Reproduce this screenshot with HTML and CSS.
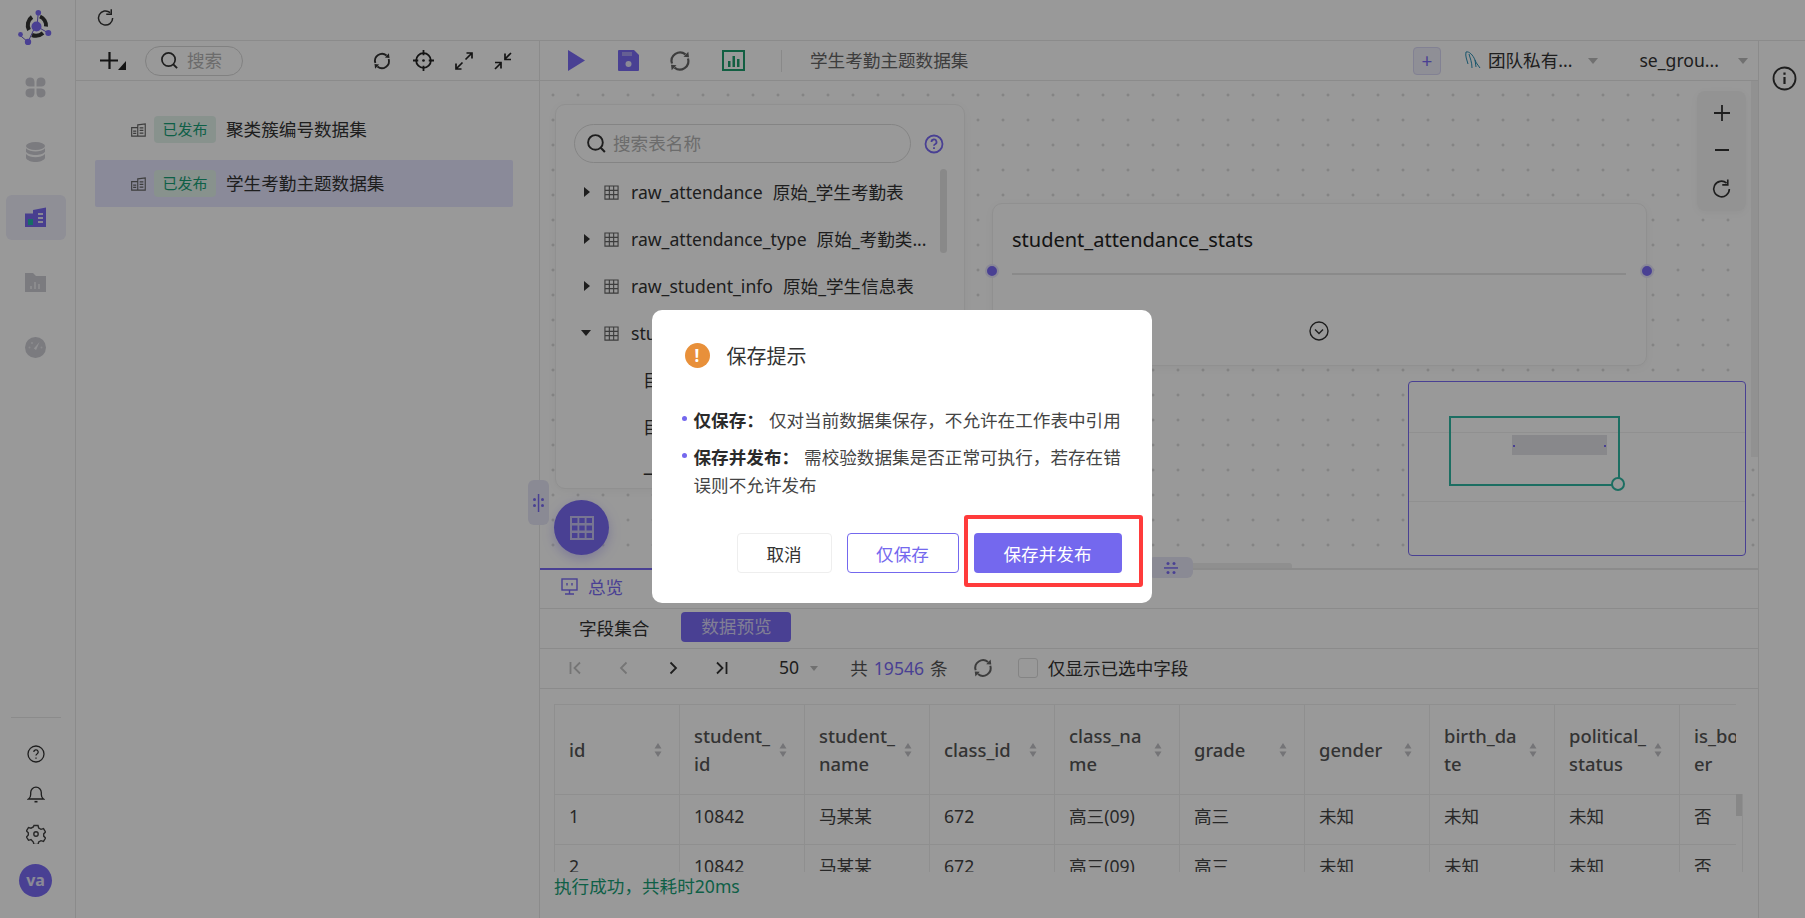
FILE: index.html
```html
<!DOCTYPE html>
<html lang="en">
<head>
    <meta charset="UTF-8">
    <title>学生考勤主题数据集</title>
    <link rel="stylesheet" href="styles.css">
</head>
<body>
    <svg class="sprites" width="0" height="0">
        <defs>
            <symbol id="i-sync" viewBox="0 0 24 24">
                <path d="M4 14.500A8.500 8.500 0 0 1 17.500 5.400M20 9.500A8.500 8.500 0 0 1 6.500 18.600" fill="none" stroke="currentColor" stroke-width="2.200"/>
                <path d="M15.500 7.800 21 8.300 20.300 2.800zM8.500 16.200 3 15.700 3.700 21.200z" fill="currentColor"/>
            </symbol>
            <symbol id="i-reset" viewBox="0 0 24 24">
                <path d="M20 12a8.500 8.500 0 1 1-3-6.500" fill="none" stroke="currentColor" stroke-width="1.800"/>
                <path d="M18.300 1.500v6h-6" fill="none" stroke="currentColor" stroke-width="1.800"/>
            </symbol>
            <symbol id="i-search" viewBox="0 0 20 20">
                <circle cx="9" cy="9" r="7" fill="none" stroke="currentColor" stroke-width="1.800"/>
                <path d="M14 14l4 4" stroke="currentColor" stroke-width="2"/>
            </symbol>
            <symbol id="i-table" viewBox="0 0 16 16">
                <path d="M1 1h14v14H1zM1 5.700h14M1 10.300h14M5.700 1v14M10.300 1v14" fill="none" stroke="currentColor" stroke-width="1.200"/>
            </symbol>
            <symbol id="i-dataset" viewBox="0 0 16 14">
                <path d="M.7 4.500h6.500v9H.7zM7.200 1.500l8-1v13h-8z" fill="none" stroke="currentColor" stroke-width="1.200"/>
                <path d="M2.300 7.500h3.300v1.300H2.300zM2.300 10h3.300v1.300H2.300zM9.200 4h4v1.300h-4zM9.200 6.800h4v1.300h-4zM9.200 9.600h4v1.300h-4z" fill="currentColor"/>
            </symbol>
            <symbol id="i-sort" viewBox="0 0 8 14">
                <path d="M4 0l3.500 5.500H.5zM4 14L.5 8.500h7z" fill="currentColor"/>
            </symbol>
        </defs>
    </svg>

    <div class="app">
        <aside class="sidebar">
            <svg class="logo" viewBox="0 0 36 36" width="36" height="36">
                <path d="M20.300 3.700 19 17M30.300 24 19 17.500M10 33 17 18M10 33 1 25.500" stroke="#6a5ccf" stroke-width="1" fill="none"/>
                <path d="M11 21a10 10 0 0 1 3-13M22 7.500a10 10 0 0 1 6 10M25 24a11 11 0 0 1-11 2" stroke="#333" stroke-width="4" fill="none"/>
                <circle cx="18.500" cy="17.500" r="5" fill="#7c6cf6"/>
                <circle cx="20.300" cy="3.700" r="2.800" fill="#7c6cf6"/>
                <circle cx="30.300" cy="24" r="3" fill="#7c6cf6"/>
                <circle cx="10" cy="33" r="3.200" fill="#7c6cf6"/>
                <circle cx="2.500" cy="25.500" r="2.400" fill="#7c6cf6"/>
            </svg>
            <nav class="side-nav">
                <a class="side-item">
                    <svg viewBox="0 0 21 21" width="21" height="21" fill="#cdcdd4"><path d="M9.500 9.500H4.700A4.500 4.500 0 1 1 9.500 4.700zM11.500 9.500V4.700a4.500 4.500 0 1 1 4.800 4.800zM9.500 11.500v4.800a4.500 4.500 0 1 1-4.800-4.800zM11.500 11.500h4.800a4.500 4.500 0 1 1-4.800 4.800z"/></svg>
                </a>
                <a class="side-item">
                    <svg viewBox="0 0 21 21" width="21" height="21" fill="#cdcdd4"><ellipse cx="10.500" cy="4" rx="9.500" ry="4"/><path d="M1 6.300c2 2.500 6 3.200 9.500 3.200S18 8.800 20 6.300v3.400c-1.500 2.300-5.500 3.200-9.500 3.200S2.500 12 1 9.700zM1 12c2 2.500 6 3.200 9.500 3.200S18 14.500 20 12v4c-1 2.500-5.500 4-9.500 4S2 18.500 1 16z"/></svg>
                </a>
                <a class="side-item active">
                    <svg viewBox="0 0 21 21" width="21" height="21"><path d="M0 6.500h8V3l13-2.500V20H0z" fill="#7868ee"/><path d="M3 12h5v6H3z" fill="#25b8a8"/><path d="M13 6h5v2h-5zM13 10h5v2h-5zM13 14h5v2h-5z" fill="#e4e2f6"/></svg>
                </a>
                <a class="side-item">
                    <svg viewBox="0 0 21 21" width="21" height="21"><path d="M0 1h8l3 3h10v16H0z" fill="#cdcdd4"/><path d="M5 14h2v3H5zM9 10h2v7H9zM13 12h2v5h-2z" fill="#e8e8ec"/></svg>
                </a>
                <a class="side-item">
                    <svg viewBox="0 0 21 21" width="21" height="21"><circle cx="10.500" cy="10.500" r="10.500" fill="#cdcdd4"/><path d="M8.800 11.500 14.500 5l-3.400 8z" fill="#f2f2f5"/><circle cx="4.500" cy="10.500" r="1" fill="#e8e8ec"/><circle cx="7" cy="6" r="1" fill="#e8e8ec"/><circle cx="16.500" cy="10.500" r="1" fill="#e8e8ec"/></svg>
                </a>
            </nav>
            <div class="side-bottom">
                <svg class="side-help" viewBox="0 0 18 18" width="18" height="18" fill="none" stroke="#333" stroke-width="1.300"><circle cx="9" cy="9" r="8"/><path d="M6.800 7a2.200 2.200 0 1 1 3.200 2c-.7.400-1 .8-1 1.600"/><path d="M9 12.400v1.300"/></svg>
                <svg viewBox="0 0 18 18" width="18" height="18" fill="none" stroke="#333" stroke-width="1.300"><path d="M1.500 14h15c-1.500-1-2.200-2.500-2.200-4.500V7.500a5.300 5.300 0 0 0-10.600 0v2C3.700 11.500 3 13 1.500 14z"/><path d="M7.500 16.700h3" stroke-width="1.600"/></svg>
                <svg viewBox="0 0 20 20" width="20" height="20" fill="none" stroke="#444" stroke-width="1.400"><path d="M8 1.500h4l.7 2.500 2.300 1.300 2.500-.7 2 3.400-1.800 1.900v2.200l1.800 1.900-2 3.400-2.500-.7-2.300 1.300-.7 2.500H8l-.7-2.500L5 15.600l-2.500.7-2-3.400 1.800-1.900V8.800L.5 6.900l2-3.400 2.500.7 2.300-1.300z"/><circle cx="10" cy="10" r="2.200"/></svg>
                <div class="avatar">va</div>
            </div>
        </aside>

        <div class="workspace">
            <div class="topbar">
                <svg class="text-dark" width="20" height="20"><use href="#i-reset"/></svg>
            </div>

            <div class="columns">
                <section class="left-panel">
                    <div class="left-toolbar">
                        <div class="add-group">
                            <svg viewBox="0 0 26 18" width="26" height="18"><path d="M9.500 0v17M0 8.500h18" stroke="#222" stroke-width="2.200"/><path d="M26 9v9h-8z" fill="#222"/></svg>
                        </div>
                        <div class="pill-search">
                            <svg class="text-dark" width="19" height="19"><use href="#i-search"/></svg>
                            <span class="placeholder">搜索</span>
                        </div>
                        <div class="left-tools">
                            <svg class="text-dark" width="20" height="20"><use href="#i-sync"/></svg>
                            <svg viewBox="0 0 20 20" width="21" height="21" fill="none" stroke="#222" stroke-width="1.700"><circle cx="10" cy="10" r="7"/><path d="M10 0v5M10 15v5M0 10h5M15 10h5"/><circle cx="10" cy="10" r="1.300" fill="#222" stroke="none"/></svg>
                            <svg viewBox="0 0 18 18" width="18" height="18" fill="none" stroke="#222" stroke-width="1.700"><path d="M10.500 7.500 17 1M11.500 1H17v5.500M7.500 10.500 1 17M6.500 17H1v-5.500"/></svg>
                            <svg viewBox="0 0 18 18" width="18" height="18" fill="none" stroke="#222" stroke-width="1.700"><path d="M17 1l-6.500 6.500M11 1.500v6h6M1 17l6.500-6.500M7 16.500v-6H1"/></svg>
                        </div>
                    </div>
                    <ul class="dataset-list">
                        <li class="dataset-row">
                            <svg class="text-mid" width="15" height="14"><use href="#i-dataset"/></svg>
                            <span class="tag">已发布</span>
                            <span class="dataset-name">聚类簇编号数据集</span>
                        </li>
                        <li class="dataset-row selected">
                            <svg class="text-mid" width="15" height="14"><use href="#i-dataset"/></svg>
                            <span class="tag">已发布</span>
                            <span class="dataset-name">学生考勤主题数据集</span>
                        </li>
                    </ul>
                </section>

                <main class="main">
                    <div class="main-toolbar">
                        <svg class="tool-play" viewBox="0 0 17 21" width="17" height="21"><path d="M0 0l17 10.500L0 21z" fill="#7b6cf6"/></svg>
                        <svg class="tool-save" viewBox="0 0 21 21" width="21" height="21"><path d="M1 0h15l5 5v15a1 1 0 0 1-1 1H1a1 1 0 0 1-1-1V1a1 1 0 0 1 1-1z" fill="#7b6cf6"/><path d="M4 2h10v4H4z" fill="#a99ff6"/><circle cx="10.500" cy="14" r="3" fill="#e8e6fb"/></svg>
                        <svg class="tool-sync text-mid" width="24" height="24"><use href="#i-sync"/></svg>
                        <svg class="tool-chart" viewBox="0 0 23 21" width="23" height="21" fill="none"><rect x="1" y="1" width="21" height="19" stroke="#1f9e6e" stroke-width="2"/><path d="M6 11h2.500v6H6zM10.500 6H13v11h-2.500zM15 9h2.500v8H15z" fill="#1f9e6e"/></svg>
                        <span class="tool-divider"></span>
                        <span class="dataset-title">学生考勤主题数据集</span>
                        <button class="add-source">+</button>
                        <svg class="db-icon" viewBox="0 0 17 19" width="17" height="19" fill="none" stroke="#2a8fb5" stroke-width="1"><path d="M2 1c3-1 7 3 9 8 1 3 3 5 5 8M2 1c-1 4 1 8 2 12M5 3c1 4 3 8 3 14M11 9l1 7"/></svg>
                        <span class="select-text">团队私有...</span>
                        <span class="caret caret-1"></span>
                        <span class="select-text select-schema">se_grou...</span>
                        <span class="caret caret-2"></span>
                    </div>

                    <div class="canvas">
                        <div class="table-panel">
                            <div class="table-search-row">
                                <div class="table-search">
                                    <svg class="text-dark" width="21" height="21"><use href="#i-search"/></svg>
                                    <span class="placeholder">搜索表名称</span>
                                </div>
                                <svg class="help-icon" viewBox="0 0 20 20" width="20" height="20" fill="none" stroke="#7b6cf6" stroke-width="1.800"><circle cx="10" cy="10" r="8.500"/><path d="M7.500 8a2.500 2.500 0 1 1 3.600 2.200c-.8.400-1.100.8-1.100 1.600M10 13.300v1.700"/></svg>
                            </div>
                            <ul class="tree">
                                <li class="tree-row"><span class="arrow"></span><svg class="text-mid" width="15" height="15"><use href="#i-table"/></svg><span>raw_attendance</span><span>原始_学生考勤表</span></li>
                                <li class="tree-row"><span class="arrow"></span><svg class="text-mid" width="15" height="15"><use href="#i-table"/></svg><span>raw_attendance_type</span><span>原始_考勤类...</span></li>
                                <li class="tree-row"><span class="arrow"></span><svg class="text-mid" width="15" height="15"><use href="#i-table"/></svg><span>raw_student_info</span><span>原始_学生信息表</span></li>
                                <li class="tree-row"><span class="arrow open"></span><svg class="text-mid" width="15" height="15"><use href="#i-table"/></svg><span>student_attendance_stats</span></li>
                                <li class="tree-child">目</li>
                                <li class="tree-child">目</li>
                                <li class="tree-child">一</li>
                            </ul>
                            <div class="tree-scroll"></div>
                        </div>

                        <button class="collapse-handle" aria-label="collapse">
                            <svg viewBox="0 0 11 18" width="11" height="18" fill="#7b6cf6"><path d="M4.800 0h1.500v18H4.800z"/><circle cx="1.500" cy="5.500" r="1.500"/><circle cx="1.500" cy="11.500" r="1.500"/><circle cx="9.500" cy="5.500" r="1.500"/><circle cx="9.500" cy="11.500" r="1.500"/></svg>
                        </button>
                        <button class="float-btn" aria-label="tables">
                            <svg viewBox="0 0 24 24" width="24" height="24" fill="#c9c5f4"><path d="M0 0h24v24H0zM2 2v5h5.500V2zm7.300 0v5h5.400V2zm7.200 0v5H22V2zM2 9.500v5h5.500v-5zm7.300 0v5h5.400v-5zm7.200 0v5H22v-5zM2 17v5h5.500v-5zm7.300 0v5h5.400v-5zm7.200 0v5H22v-5z" fill-rule="evenodd"/></svg>
                        </button>

                        <div class="node">
                            <div class="node-title">student_attendance_stats</div>
                            <div class="node-rule"></div>
                            <svg class="node-more" viewBox="0 0 20 20" width="20" height="20" fill="none" stroke="#333" stroke-width="1.400"><circle cx="10" cy="10" r="9"/><path d="M6 8.500l4 4 4-4"/></svg>
                            <span class="port port-in"></span>
                            <span class="port port-out"></span>
                        </div>

                        <div class="zoom-tools">
                            <svg viewBox="0 0 18 18" width="18" height="18"><path d="M9 1v16M1 9h16" stroke="#333" stroke-width="1.800"/></svg>
                            <svg viewBox="0 0 18 18" width="18" height="18"><path d="M2 9h14" stroke="#333" stroke-width="2"/></svg>
                            <svg class="text-dark" width="22" height="22"><use href="#i-reset"/></svg>
                        </div>

                        <div class="minimap">
                            <span class="mini-line line-a"></span>
                            <span class="mini-line line-b"></span>
                            <span class="mini-node"></span>
                            <span class="mini-view"></span>
                            <span class="mini-grip"></span>
                        </div>

                        <div class="canvas-vscroll"></div>
                        <div class="canvas-hscroll"></div>
                        <div class="split-handle">
                            <svg viewBox="0 0 14 12" width="14" height="12" fill="#7b6cf6"><path d="M0 5.200h14v1.500H0z"/><circle cx="4" cy="1.500" r="1.500"/><circle cx="10" cy="1.500" r="1.500"/><circle cx="4" cy="10.500" r="1.500"/><circle cx="10" cy="10.500" r="1.500"/></svg>
                        </div>
                    </div>

                    <div class="tab-strip"><span class="tab-ink"></span></div>
                    <div class="tab-row">
                        <svg viewBox="0 0 17 17" width="17" height="17" fill="none" stroke="#7b6cf6" stroke-width="1.400"><rect x="1" y="1" width="15" height="11"/><path d="M8.500 12v4M4 16h9M6 5v2.500M11 5v2.500"/></svg>
                        <span class="tab-label">总览</span>
                    </div>
                    <div class="sub-tabs">
                        <span class="sub-tab">字段集合</span>
                        <span class="sub-tab current">数据预览</span>
                    </div>
                    <div class="pager">
                        <svg class="page-btn off" viewBox="0 0 14 14" width="14" height="14" fill="none" stroke="currentColor" stroke-width="1.800"><path d="M2.500 1v12M12 1.500 6.500 7l5.500 5.500"/></svg>
                        <svg class="page-btn off" viewBox="0 0 14 14" width="14" height="14" fill="none" stroke="currentColor" stroke-width="1.800"><path d="M9.500 1.500 4 7l5.500 5.500"/></svg>
                        <svg class="page-btn" viewBox="0 0 14 14" width="14" height="14" fill="none" stroke="currentColor" stroke-width="1.800"><path d="M4.500 1.500 10 7l-5.500 5.500"/></svg>
                        <svg class="page-btn" viewBox="0 0 14 14" width="14" height="14" fill="none" stroke="currentColor" stroke-width="1.800"><path d="M2 1.500 7.500 7 2 12.500M11.500 1v12"/></svg>
                        <span class="page-size">50</span>
                        <span class="caret caret-small"></span>
                        <span class="page-total">共<em>19546</em>条</span>
                        <svg class="page-sync text-mid" width="22" height="22"><use href="#i-sync"/></svg>
                        <span class="checkbox"></span>
                        <span class="check-label">仅显示已选中字段</span>
                    </div>

                    <div class="table-wrap">
                        <div class="table-clip">
                            <table class="data-table">
                                <colgroup>
                                    <col class="col-first"><col><col><col><col><col><col><col><col><col>
                                </colgroup>
                                <thead>
                                    <tr>
                                        <th><div class="th-in"><span>id</span><svg class="sort" width="8" height="14"><use href="#i-sort"/></svg></div></th>
                                        <th><div class="th-in"><span>student_<br>id</span><svg class="sort" width="8" height="14"><use href="#i-sort"/></svg></div></th>
                                        <th><div class="th-in"><span>student_<br>name</span><svg class="sort" width="8" height="14"><use href="#i-sort"/></svg></div></th>
                                        <th><div class="th-in"><span>class_id</span><svg class="sort" width="8" height="14"><use href="#i-sort"/></svg></div></th>
                                        <th><div class="th-in"><span>class_na<br>me</span><svg class="sort" width="8" height="14"><use href="#i-sort"/></svg></div></th>
                                        <th><div class="th-in"><span>grade</span><svg class="sort" width="8" height="14"><use href="#i-sort"/></svg></div></th>
                                        <th><div class="th-in"><span>gender</span><svg class="sort" width="8" height="14"><use href="#i-sort"/></svg></div></th>
                                        <th><div class="th-in"><span>birth_da<br>te</span><svg class="sort" width="8" height="14"><use href="#i-sort"/></svg></div></th>
                                        <th><div class="th-in"><span>political_<br>status</span><svg class="sort" width="8" height="14"><use href="#i-sort"/></svg></div></th>
                                        <th><div class="th-in"><span>is_board<br>er</span><svg class="sort" width="8" height="14"><use href="#i-sort"/></svg></div></th>
                                    </tr>
                                </thead>
                                <tbody>
                                    <tr><td>1</td><td>10842</td><td>马某某</td><td>672</td><td>高三(09)</td><td>高三</td><td>未知</td><td>未知</td><td>未知</td><td>否</td></tr>
                                    <tr><td>2</td><td>10842</td><td>马某某</td><td>672</td><td>高三(09)</td><td>高三</td><td>未知</td><td>未知</td><td>未知</td><td>否</td></tr>
                                </tbody>
                            </table>
                        </div>
                        <div class="table-vscroll"><span class="table-thumb"></span></div>
                    </div>
                    <div class="run-status">执行成功，共耗时20ms</div>
                </main>

                <aside class="info-rail">
                    <svg viewBox="0 0 25 25" width="25" height="25" fill="none" stroke="#333" stroke-width="1.800"><circle cx="12.500" cy="12.500" r="11"/><path d="M12.500 11v7" stroke-width="2.200"/><path d="M12.500 6.500v2.300" stroke-width="2.200"/></svg>
                </aside>
            </div>
        </div>
    </div>

    <div class="modal-mask">
        <div class="dialog">
            <div class="dialog-head">
                <span class="warn-icon">!</span>
                <span class="dialog-title">保存提示</span>
            </div>
            <ul class="dialog-list">
                <li><b>仅保存：</b>仅对当前数据集保存，不允许在工作表中引用</li>
                <li><b>保存并发布：</b>需校验数据集是否正常可执行，若存在错误则不允许发布</li>
            </ul>
            <div class="dialog-actions">
                <button class="btn btn-cancel">取消</button>
                <button class="btn btn-outline">仅保存</button>
                <button class="btn btn-primary">保存并发布</button>
            </div>
            <span class="red-mark"></span>
        </div>
    </div>
</body>
</html>
```

FILE: styles.css
```css
* {
    margin: 0;
    padding: 0;
    box-sizing: border-box;
}

html, body {
    height: 100%;
    overflow: hidden;
}

body {
    font-family: "Noto Sans", "Noto Sans CJK SC", sans-serif;
    font-size: 17.600px;
    color: #2b2b2b;
    background: #fff;
}

ul {
    list-style: none;
}

button {
    font: inherit;
    border: none;
    background: none;
}

svg {
    display: block;
    flex: none;
}

.sprites {
    position: absolute;
}

.text-dark { color: #333; }
.text-mid { color: #666; }

.app {
    display: flex;
    height: 918px;
}

/* sidebar */
.sidebar {
    width: 76px;
    flex: none;
    border-right: 1px solid #e8e8e8;
    display: flex;
    flex-direction: column;
    align-items: center;
    padding: 9px 4px 0 0;
}

.side-nav {
    margin-top: 20px;
    display: flex;
    flex-direction: column;
    gap: 20px;
}

.side-item {
    width: 60px;
    height: 45px;
    border-radius: 6px;
    display: flex;
    align-items: center;
    justify-content: center;
}

.side-item.active {
    background: #eeeefb;
}

.side-bottom {
    margin-top: auto;
    margin-bottom: 21px;
    padding-top: 27px;
    border-top: 1px solid #e8e8e8;
    width: 50px;
    display: flex;
    flex-direction: column;
    align-items: center;
    gap: 21px;
}

.side-help {
    margin-bottom: 1px;
}

.avatar {
    width: 33px;
    height: 33px;
    border-radius: 50%;
    background: #7b6cf6;
    color: #e8e6fb;
    font-weight: 700;
    font-size: 16px;
    line-height: 33px;
    text-align: center;
    margin-top: -1px;
}

/* frame */
.workspace {
    flex: 1;
    display: flex;
    flex-direction: column;
    min-width: 0;
}

.topbar {
    height: 41px;
    flex: none;
    border-bottom: 1px solid #e8e8e8;
    padding: 8px 0 0 20px;
}

.columns {
    flex: 1;
    display: flex;
    min-height: 0;
}

/* dataset list */
.left-panel {
    width: 463px;
    flex: none;
}

.left-toolbar {
    height: 40px;
    border-bottom: 1px solid #e8e8e8;
    display: flex;
    align-items: center;
    padding: 0 27px 0 24px;
}

.add-group {
    width: 26px;
}

.pill-search {
    margin-left: 19px;
    width: 98px;
    height: 30px;
    border: 1px solid #d8d8d8;
    border-radius: 15px;
    display: flex;
    align-items: center;
    gap: 8px;
    padding-left: 14px;
}

.placeholder {
    color: #b4b4b4;
    font-size: 17.600px;
    margin-top: -2px;
}

.left-tools {
    margin-left: auto;
    display: flex;
    align-items: center;
    gap: 21px;
}

.dataset-list {
    padding: 25px 26px 0 19px;
    display: flex;
    flex-direction: column;
    gap: 7px;
}

.dataset-row {
    height: 47px;
    display: flex;
    align-items: center;
    padding-left: 36px;
    border-radius: 2px;
    color: #333;
}

.dataset-row.selected {
    background: #e6e6ff;
}

.dataset-name {
    margin-top: -2px;
}

.tag {
    margin: 0 10px 0 8px;
    width: 62px;
    height: 27px;
    border-radius: 4px;
    background: #e3f3ec;
    color: #18a077;
    font-size: 15px;
    line-height: 26px;
    text-align: center;
}

/* main column */
.main {
    width: 1219px;
    flex: none;
    border-left: 1px solid #e8e8e8;
    display: flex;
    flex-direction: column;
}

.main-toolbar {
    height: 40px;
    flex: none;
    border-bottom: 1px solid #e8e8e8;
    display: flex;
    align-items: center;
    padding: 0 10px 0 28px;
}

.tool-save { margin-left: 33px; }
.tool-sync { margin-left: 29px; }
.tool-chart { margin-left: 30px; }

.tool-divider {
    width: 1px;
    height: 22px;
    background: #e4e4e4;
    margin-left: 36px;
}

.dataset-title {
    margin: -2px 0 0 28px;
    color: #666;
}

.add-source {
    margin-left: auto;
    width: 28px;
    height: 28px;
    border: 1px solid #d9d7f5;
    border-radius: 4px;
    background: #eeeefb;
    color: #7b6cf6;
    font-size: 19px;
    line-height: 24px;
}

.db-icon { margin-left: 23px; }

.select-text {
    margin: -2px 0 0 7px;
    color: #333;
}

.caret {
    width: 0;
    height: 0;
    border-left: 5px solid transparent;
    border-right: 5px solid transparent;
    border-top: 6px solid #bbb;
}

.caret-1 { margin-left: 16px; }
.select-schema { margin-left: 41px; }
.caret-2 { margin-left: 19px; }

/* canvas */
.canvas {
    height: 487px;
    flex: none;
    position: relative;
    background-color: #fff;
    background-image: radial-gradient(circle, #d0d0d0 1px, transparent 1.200px);
    background-size: 25px 25px;
    background-position: 0.500px 1.500px;
}

.table-panel {
    position: absolute;
    left: 15px;
    top: 23px;
    width: 410px;
    height: 385px;
    background: #fff;
    border: 1px solid #f0f0f0;
    border-radius: 10px;
    box-shadow: 0 2px 10px rgba(0, 0, 0, 0.04);
    padding: 19px 0 0 18px;
    overflow: hidden;
}

.table-search-row {
    display: flex;
    align-items: center;
    gap: 13px;
}

.table-search {
    width: 337px;
    height: 39px;
    border: 1px solid #ddd;
    border-radius: 20px;
    display: flex;
    align-items: center;
    gap: 6px;
    padding-left: 11px;
}

.tree {
    margin-top: 6px;
}

.tree-row {
    height: 47px;
    display: flex;
    align-items: center;
    padding-left: 10px;
    white-space: nowrap;
    color: #333;
}

.tree-row svg {
    margin: 0 12px 0 14px;
}

.tree-row span {
    margin-top: -2px;
}

.tree-row span + span {
    margin-left: 10px;
}

.tree-row svg + span {
    margin-left: 0;
}

.arrow {
    width: 0;
    height: 0;
    border-top: 5px solid transparent;
    border-bottom: 5px solid transparent;
    border-left: 6px solid #333;
}

.arrow.open {
    margin-left: -3px;
    margin-right: -1px;
    border-left: 5px solid transparent;
    border-right: 5px solid transparent;
    border-top: 6px solid #333;
    border-bottom: 0;
}

.tree-child {
    height: 47px;
    line-height: 47px;
    padding-left: 69px;
    color: #333;
}

.tree-scroll {
    position: absolute;
    left: 384px;
    top: 64px;
    width: 7px;
    height: 84px;
    border-radius: 4px;
    background: #e4e4e4;
}

.collapse-handle {
    position: absolute;
    left: -12px;
    top: 399px;
    width: 21px;
    height: 45px;
    border-radius: 6px;
    background: #e6e6f7;
    display: flex;
    align-items: center;
    justify-content: center;
    z-index: 2;
}

.float-btn {
    position: absolute;
    left: 14px;
    top: 419px;
    width: 55px;
    height: 55px;
    border-radius: 50%;
    background: #7b6cf6;
    box-shadow: 0 4px 12px rgba(123, 108, 246, 0.35);
    display: flex;
    align-items: center;
    justify-content: center;
}

.node {
    position: absolute;
    left: 452px;
    top: 122px;
    width: 655px;
    height: 163px;
    background: #fff;
    border: 1px solid #f0f0f0;
    border-radius: 10px;
    box-shadow: 0 2px 10px rgba(0, 0, 0, 0.04);
    padding: 20px 20px 0 19px;
}

.node-title {
    font-size: 20px;
    line-height: 32px;
    color: #222;
}

.node-rule {
    margin-top: 17px;
    height: 2px;
    background: #e6e6e6;
}

.node-more {
    margin: 46px auto 0;
}

.port {
    position: absolute;
    top: 60px;
    width: 14px;
    height: 14px;
    border-radius: 50%;
    background: #7b6cf6;
    border: 2px solid #e6e4fb;
}

.port-in { left: -8px; }
.port-out { right: -8px; }

.zoom-tools {
    position: absolute;
    left: 1157px;
    top: 10px;
    width: 49px;
    height: 120px;
    border-radius: 8px;
    background: #f5f5f5;
    box-shadow: 0 2px 8px rgba(0, 0, 0, 0.04);
    display: flex;
    flex-direction: column;
    align-items: center;
    justify-content: center;
    gap: 19px;
    padding-top: 2px;
}

.minimap {
    position: absolute;
    left: 868px;
    top: 300px;
    width: 338px;
    height: 175px;
    border: 1px solid #7b6cf6;
    border-radius: 4px;
    background: #fff;
}

.mini-line {
    position: absolute;
    left: 0;
    right: 0;
    height: 1px;
    background: #f0f0f0;
}

.line-a { top: 50px; }
.line-b { top: 119px; }

.mini-node {
    position: absolute;
    left: 103px;
    top: 53px;
    width: 95px;
    height: 20px;
    background: #e3e3e8;
}

.mini-node::before,
.mini-node::after {
    content: "";
    position: absolute;
    top: 10px;
    width: 2px;
    height: 2px;
    background: #7b6cf6;
}

.mini-node::before { left: 1px; }
.mini-node::after { right: 1px; }

.mini-view {
    position: absolute;
    left: 40px;
    top: 34px;
    width: 171px;
    height: 70px;
    border: 2px solid #30b8a4;
}

.mini-grip {
    position: absolute;
    left: 202px;
    top: 95px;
    width: 14px;
    height: 14px;
    border: 2px solid #30b8a4;
    border-radius: 50%;
    background: #fff;
}

.canvas-vscroll {
    position: absolute;
    right: 0;
    top: 0;
    width: 7px;
    height: 376px;
    background: #f2f2f2;
}

.canvas-hscroll {
    position: absolute;
    left: 640px;
    top: 482px;
    width: 112px;
    height: 5px;
    border-radius: 3px 3px 0 0;
    background: #eee;
}

.split-handle {
    position: absolute;
    left: 608px;
    top: 476px;
    width: 45px;
    height: 21px;
    border-radius: 6px;
    background: #e6e6f7;
    display: flex;
    align-items: center;
    justify-content: center;
    z-index: 2;
}

/* bottom panel */
.tab-strip {
    height: 2px;
    flex: none;
    background: #e8e8e8;
}

.tab-ink {
    display: block;
    width: 130px;
    height: 2px;
    background: #7b6cf6;
}

.tab-row {
    height: 39px;
    flex: none;
    border-bottom: 1px solid #e8e8e8;
    display: flex;
    align-items: center;
    padding: 0 0 5px 21px;
    gap: 10px;
}

.tab-label {
    color: #7b6cf6;
}

.sub-tabs {
    height: 40px;
    flex: none;
    border-bottom: 1px solid #e8e8e8;
    display: flex;
    align-items: center;
    padding: 0 0 3px 39px;
    gap: 32px;
}

.sub-tab {
    color: #333;
}

.sub-tab.current {
    width: 110px;
    height: 30px;
    line-height: 29px;
    text-align: center;
    border-radius: 4px;
    background: #7b6cf6;
    color: #d8d4f8;
}

.pager {
    height: 40px;
    flex: none;
    border-bottom: 1px solid #e8e8e8;
    display: flex;
    align-items: center;
    padding: 0 0 1px 28px;
    color: #333;
}

.page-btn {
    color: #333;
    margin-right: 35px;
}

.page-btn.off {
    color: #c4c4c4;
}

.page-size {
    margin: -2px 0 0 15px;
}

.caret-small {
    margin-left: 11px;
    border-left-width: 4px;
    border-right-width: 4px;
    border-top-width: 5px;
}

.page-total {
    margin: -2px 0 0 32px;
    white-space: nowrap;
    color: #555;
}

.page-total em {
    font-style: normal;
    color: #7b6cf6;
    margin: 0 6px;
}

.page-sync {
    margin-left: 24px;
}

.checkbox {
    margin-left: 24px;
    width: 20px;
    height: 20px;
    border: 1px solid #ddd;
    border-radius: 3px;
}

.check-label {
    margin: -2px 0 0 10px;
}

.table-wrap {
    margin: 15px 16px 0 14px;
    height: 168px;
    flex: none;
    display: flex;
}

.table-clip {
    width: 1182px;
    flex: none;
    overflow: hidden;
}

.data-table {
    table-layout: fixed;
    width: 1250px;
    border-collapse: collapse;
}

.data-table col {
    width: 125px;
}

.data-table .col-first {
    width: 125px;
}

.data-table th {
    height: 90px;
    border: 1px solid #efefef;
    padding: 0 17px 0 14px;
    font-size: 18.400px;
    font-weight: 500;
    text-align: left;
    line-height: 28px;
    color: #555;
}

.th-in {
    display: flex;
    align-items: center;
    justify-content: space-between;
    white-space: nowrap;
}

.sort {
    color: #c2c2c6;
}

.data-table td {
    height: 50px;
    border: 1px solid #efefef;
    padding: 0 14px 8px;
    color: #444;
    white-space: nowrap;
}

.table-vscroll {
    width: 7px;
    flex: none;
    margin-top: 90px;
    border-right: 1px solid #efefef;
}

.table-thumb {
    display: block;
    width: 6px;
    height: 22px;
    background: #e2e2e2;
}

.run-status {
    margin-left: 14px;
    height: 30px;
    line-height: 28px;
    color: #18a077;
}

.info-rail {
    flex: 1;
    border-left: 1px solid #e8e8e8;
    padding: 25px 0 0 13px;
}

/* save dialog */
.modal-mask {
    position: fixed;
    inset: 0;
    background: rgba(0, 0, 0, 0.4);
    display: flex;
    justify-content: center;
    align-items: flex-start;
    padding: 310px 2px 0 0;
    z-index: 10;
}

.dialog {
    position: relative;
    width: 500px;
    height: 293px;
    background: #fff;
    border-radius: 10px;
    padding: 30px 30px 29px 33px;
}

.dialog-head {
    height: 30px;
    display: flex;
    align-items: center;
    gap: 17px;
}

.warn-icon {
    width: 25px;
    height: 25px;
    border-radius: 50%;
    background: #e8903a;
    color: #fff;
    font-weight: 700;
    font-size: 17px;
    line-height: 25px;
    text-align: center;
}

.dialog-title {
    font-size: 20px;
    color: #333;
}

.dialog-list {
    margin: 36px -6px 34px 9px;
}

.dialog-list li {
    position: relative;
    line-height: 28px;
    margin-bottom: 9px;
    color: #444;
}

.dialog-list li:last-child {
    margin-bottom: 0;
}

.dialog-list li::before {
    content: "";
    position: absolute;
    left: -12px;
    top: 10px;
    width: 5px;
    height: 5px;
    border-radius: 50%;
    background: #7468ee;
}

.dialog-list b {
    margin-right: 5px;
    color: #2b2b2b;
}

.dialog-actions {
    display: flex;
    justify-content: flex-end;
    gap: 15px;
}

.btn {
    height: 40px;
    border-radius: 4px;
}

.btn-cancel {
    width: 95px;
    border: 1px solid #eee;
    color: #333;
}

.btn-outline {
    width: 112px;
    border: 1px solid #7468ee;
    color: #7468ee;
}

.btn-primary {
    width: 148px;
    background: #7468ee;
    color: #fff;
}

.red-mark {
    position: absolute;
    left: 312px;
    top: 205px;
    width: 179px;
    height: 72px;
    border: 4px solid #ff3b3b;
    border-radius: 3px;
}
```
